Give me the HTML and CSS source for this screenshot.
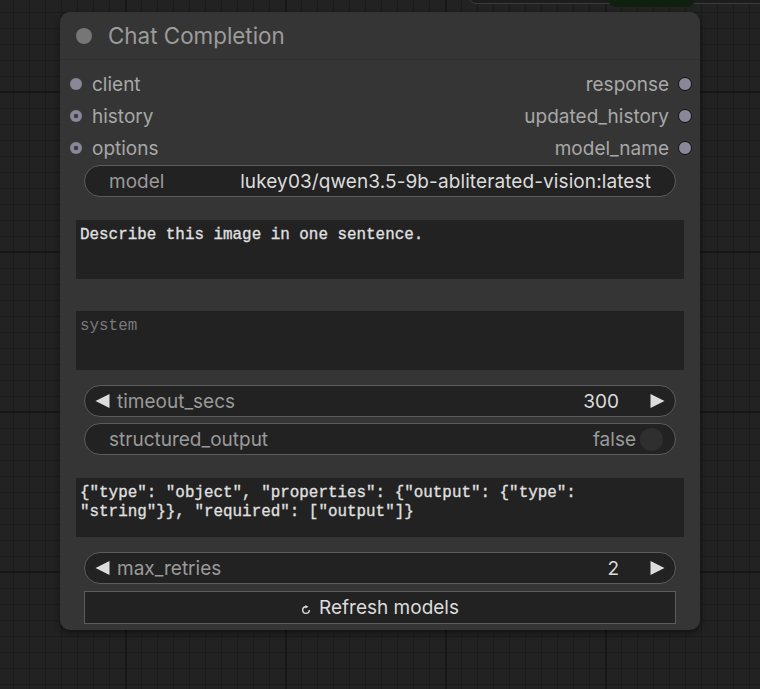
FILE: index.html
```html
<!DOCTYPE html>
<html lang="en">
<head>
<meta charset="utf-8">
<title>Chat Completion</title>
<link rel="stylesheet" href="styles.css">
</head>
<body>
<div class="canvas">
  <div class="node-above"></div>
  <div class="node-above-badge"></div>

  <div class="node">
    <div class="node-title">
      <span class="title-dot"></span>
      <span class="title-text">Chat Completion</span>
    </div>

    <div class="node-body">
      <div class="slots">
        <div class="slot-col">
          <div class="slot in"><span class="dot solid"></span><span class="slot-name">client</span></div>
          <div class="slot in"><span class="dot ring"></span><span class="slot-name">history</span></div>
          <div class="slot in"><span class="dot ring"></span><span class="slot-name">options</span></div>
        </div>
        <div class="slot-col right">
          <div class="slot out"><span class="slot-name">response</span><span class="dot outlined"></span></div>
          <div class="slot out"><span class="slot-name">updated_history</span><span class="dot outlined"></span></div>
          <div class="slot out"><span class="slot-name">model_name</span><span class="dot outlined"></span></div>
        </div>
      </div>

      <div class="widget combo w-model">
        <span class="w-label">model</span>
        <span class="w-value">lukey03/qwen3.5-9b-abliterated-vision:latest</span>
      </div>

      <textarea class="text-field tf-prompt" readonly>Describe this image in one sentence.</textarea>
      <textarea class="text-field tf-system" placeholder="system" readonly></textarea>

      <div class="widget number w-timeout">
        <svg class="arrow" viewBox="0 0 16 16"><polygon points="15,1 15,15 1,8"/></svg>
        <span class="w-label grow">timeout_secs</span>
        <span class="w-value">300</span>
        <svg class="arrow" viewBox="0 0 16 16"><polygon points="1,1 1,15 15,8"/></svg>
      </div>

      <div class="widget toggle w-structured">
        <span class="w-label grow">structured_output</span>
        <span class="w-off">false</span>
        <span class="knob"></span>
      </div>

      <textarea class="text-field tf-schema" readonly>{"type": "object", "properties": {"output": {"type": "string"}}, "required": ["output"]}</textarea>

      <div class="widget number w-retries">
        <svg class="arrow" viewBox="0 0 16 16"><polygon points="15,1 15,15 1,8"/></svg>
        <span class="w-label grow">max_retries</span>
        <span class="w-value">2</span>
        <svg class="arrow" viewBox="0 0 16 16"><polygon points="1,1 1,15 15,8"/></svg>
      </div>

      <button class="refresh" type="button">
        <svg class="refresh-icon" viewBox="0 0 10 10">
          <path d="M5 1.8A3.3 3.3 0 1 0 8.3 5.1"/>
          <polygon points="4.4,0 7.4,1.8 4.4,3.6"/>
        </svg>
        <span>Refresh models</span>
      </button>
    </div>
  </div>
</div>
</body>
</html>
```

FILE: styles.css
```css
* {
  box-sizing: border-box;
}

html, body {
  margin: 0;
  padding: 0;
  width: 760px;
  height: 689px;
  overflow: hidden;
}

body {
  font-family: Inter, "Noto Sans", sans-serif;
}

/* graph canvas with minor and major grid lines */
.canvas {
  position: relative;
  width: 760px;
  height: 689px;
  background-color: #222222;
  background-image:
    linear-gradient(to right, #171717 2px, transparent 2px),
    linear-gradient(to bottom, #171717 2px, transparent 2px),
    linear-gradient(to right, #1b1b1b 1px, transparent 1px),
    linear-gradient(to bottom, #1b1b1b 1px, transparent 1px);
  background-size: 160px 160px, 160px 160px, 16px 16px, 16px 16px;
  background-position: 125px 0, 0 91px, 13px 0, 0 12px;
}

/* bottom edge of the neighbouring node */
.node-above {
  position: absolute;
  left: 468px;
  top: -20px;
  width: 320px;
  height: 24px;
  background: #1c1c1c;
  border: 1px solid #3c3c3c;
  border-radius: 0 0 0 8px;
}

.node-above-badge {
  position: absolute;
  left: 608px;
  top: -10px;
  width: 87px;
  height: 17px;
  background: #10200f;
  border-radius: 0 0 8px 8px;
}

/* node */
.node {
  position: absolute;
  left: 60px;
  top: 12px;
  width: 640px;
  height: 618px;
  background: #353535;
  border-radius: 10px;
  box-shadow: 0 3px 6px rgba(0, 0, 0, 0.45);
}

.node-title {
  height: 48px;
  display: flex;
  align-items: center;
  padding-left: 16px;
  gap: 16px;
  border-bottom: 1px solid #2e2e2e;
}

.title-dot {
  width: 16px;
  height: 16px;
  border-radius: 50%;
  background: #767676;
  margin-top: 1px;
}

.title-text {
  font-size: 22.4px;
  color: #9c9c9c;
}

.node-body {
  display: flex;
  flex-direction: column;
  padding-top: 8px;
}

/* input / output slots */
.slots {
  display: flex;
  justify-content: space-between;
  padding: 0 8px 0 10px;
}

.slot-col {
  display: flex;
  flex-direction: column;
}

.slot-col.right {
  align-items: flex-end;
}

.slot {
  height: 32px;
  display: flex;
  align-items: center;
  gap: 10px;
  font-size: 19px;
  color: #a8a8a8;
}

.slot.out {
  gap: 9px;
}

.dot {
  width: 12px;
  height: 12px;
  border-radius: 50%;
  background: #8a8898;
  flex: none;
}

.dot.ring {
  background: radial-gradient(circle, #3a3a44 0 2px, #8a8898 2.5px);
}

.dot.outlined {
  width: 14px;
  height: 14px;
  border: 1.5px solid #101010;
}

/* widgets */
.widget {
  margin: 0 24px;
  height: 32px;
  display: flex;
  align-items: center;
  background: #222222;
  border: 1.5px solid #5c5c5c;
  border-radius: 16px;
  font-size: 19px;
  white-space: nowrap;
}

.w-label {
  color: #9a9a9a;
}

.w-value {
  color: #dcdcdc;
}

.grow {
  flex: 1;
}

.combo {
  margin-top: 1px;
  justify-content: space-between;
  padding: 0 24px;
}

.combo .w-value {
  letter-spacing: 0.1px;
}

.number {
  padding: 0 9px;
}

.number .arrow {
  width: 17px;
  height: 16px;
  fill: #dcdcdc;
  flex: none;
}

.number .arrow:first-child {
  margin-right: 6px;
}

.number .w-value {
  margin-right: 30px;
}

.w-timeout {
  margin-top: 15px;
}

.w-structured {
  margin-top: 6px;
  padding: 0 12px 0 24px;
}

.w-off {
  color: #9a9a9a;
  margin-right: 4px;
}

.knob {
  width: 23px;
  height: 23px;
  border-radius: 50%;
  background: #2f2f2f;
}

.w-retries {
  margin-top: 15px;
}

/* multiline text fields */
.text-field {
  display: block;
  margin: 0 16px;
  width: calc(100% - 32px);
  height: 59px;
  padding: 6px 4px;
  background: #222222;
  border: none;
  outline: none;
  resize: none;
  overflow: hidden;
  color: #e0e0e0;
  font-family: "Liberation Mono", "DejaVu Sans Mono", monospace;
  font-size: 15.9px;
  line-height: 19px;
  -webkit-text-stroke: 0.3px #e0e0e0;
}

.text-field::placeholder {
  color: #7a7a7a;
  -webkit-text-stroke: 0;
}

.tf-prompt {
  margin-top: 23px;
}

.tf-system {
  margin-top: 32px;
}

.tf-schema {
  margin-top: 23px;
}

/* refresh button */
.refresh {
  margin: 7px 24px 0;
  height: 33px;
  display: flex;
  align-items: center;
  justify-content: center;
  gap: 8px;
  background: #222222;
  border: 1.5px solid #5c5c5c;
  border-radius: 0;
  color: #dcdcdc;
  font-family: Inter, "Noto Sans", sans-serif;
  font-size: 19px;
  padding: 0;
}

.refresh-icon {
  width: 10px;
  height: 10px;
  margin-top: 4px;
  fill: #dcdcdc;
}

.refresh-icon path {
  fill: none;
  stroke: #dcdcdc;
  stroke-width: 1.4;
}
```
